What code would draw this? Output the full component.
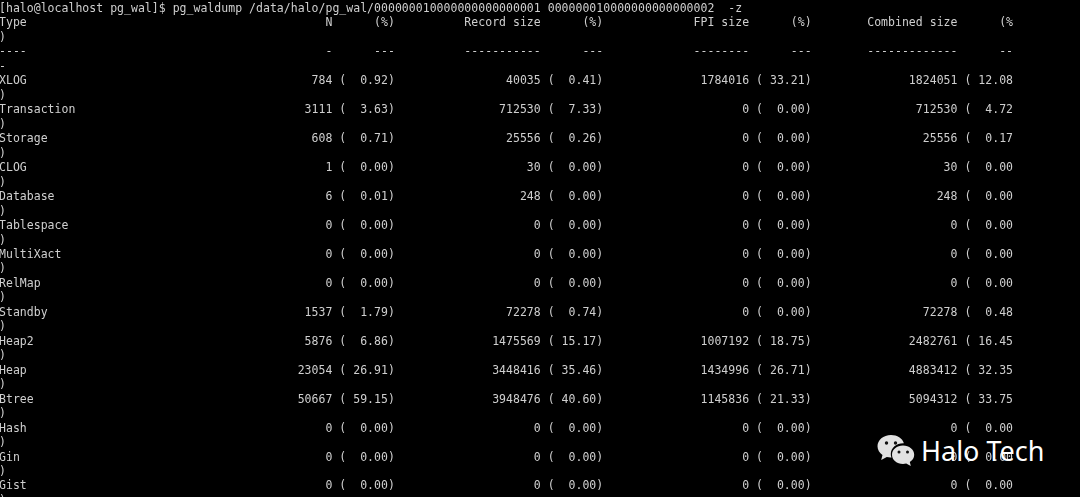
<script>
	const COLS = 146;

	// name, N, %, record size, %, fpi size, %, combined size, %
	const rows = [
		['XLOG', 784, '0.92', 40035, '0.41', 1784016, '33.21', 1824051, '12.08'],
		['Transaction', 3111, '3.63', 712530, '7.33', 0, '0.00', 712530, '4.72'],
		['Storage', 608, '0.71', 25556, '0.26', 0, '0.00', 25556, '0.17'],
		['CLOG', 1, '0.00', 30, '0.00', 0, '0.00', 30, '0.00'],
		['Database', 6, '0.01', 248, '0.00', 0, '0.00', 248, '0.00'],
		['Tablespace', 0, '0.00', 0, '0.00', 0, '0.00', 0, '0.00'],
		['MultiXact', 0, '0.00', 0, '0.00', 0, '0.00', 0, '0.00'],
		['RelMap', 0, '0.00', 0, '0.00', 0, '0.00', 0, '0.00'],
		['Standby', 1537, '1.79', 72278, '0.74', 0, '0.00', 72278, '0.48'],
		['Heap2', 5876, '6.86', 1475569, '15.17', 1007192, '18.75', 2482761, '16.45'],
		['Heap', 23054, '26.91', 3448416, '35.46', 1434996, '26.71', 4883412, '32.35'],
		['Btree', 50667, '59.15', 3948476, '40.60', 1145836, '21.33', 5094312, '33.75'],
		['Hash', 0, '0.00', 0, '0.00', 0, '0.00', 0, '0.00'],
		['Gin', 0, '0.00', 0, '0.00', 0, '0.00', 0, '0.00'],
		['Gist', 0, '0.00', 0, '0.00', 0, '0.00', 0, '0.00']
	];

	function header(c) {
		return (
			c[0].padEnd(27) +
			' ' + c[1].padStart(20) + ' ' + c[2].padStart(8) +
			' ' + c[3].padStart(20) + ' ' + c[4].padStart(8) +
			' ' + c[5].padStart(20) + ' ' + c[6].padStart(8) +
			' ' + c[7].padStart(20) + ' ' + c[8].padStart(8)
		);
	}

	function record(r) {
		let line = r[0].padEnd(27);
		for (let i = 1; i < r.length; i += 2) {
			line += ' ' + String(r[i]).padStart(20) + ' (' + r[i + 1].padStart(6) + ')';
		}
		return line;
	}

	// the terminal wraps at its column count
	function wrap(line) {
		return [line.slice(0, COLS), line.slice(COLS)];
	}

	const lines = [
		'[halo@localhost pg_wal]$ pg_waldump /data/halo/pg_wal/000000010000000000000001 000000010000000000000002  -z',
		...wrap(header(['Type', 'N', '(%)', 'Record size', '(%)', 'FPI size', '(%)', 'Combined size', '(%)'])),
		...wrap(header(['----', '-', '---', '-----------', '---', '--------', '---', '-------------', '---'])),
		...rows.flatMap((r) => wrap(record(r)))
	];
</script>

<main class="screen">
	<pre class="term">{lines.join('\n')}</pre>

	<div class="mark">
		<svg class="wechat" width="40" height="34" viewBox="0 0 40 34" aria-hidden="true">
			<path class="bubble" d="M15 1C7.3 1 1.5 6 1.5 12.3c0 3.6 2 6.7 5 8.8L5.2 26l5.6-2.9c1.2.3 2.5.5 3.8.5h.9c-.5-1.2-.7-2.4-.7-3.7 0-6 5.600-10.700 12.500-10.700h.6C26.400 4.300 21.200 1 15 1z" />
			<circle class="eye" cx="10.500" cy="9" r="1.700" />
			<circle class="eye" cx="19.500" cy="9" r="1.700" />
			<path class="bubble" d="M27 11.500c-6.100 0-11 4-11 9.200s4.900 9.200 11 9.200c1.100 0 2.200-.2 3.200-.4l4.600 2.500-1-4c2.700-1.700 4.400-4.300 4.400-7.300 0-5.200-5-9.200-11.200-9.200z" />
			<circle class="eye" cx="23" cy="18" r="1.500" />
			<circle class="eye" cx="31.500" cy="18" r="1.500" />
		</svg>
		<span class="brand">Halo Tech</span>
	</div>
</main>

<style>
	:global(body) {
		margin: 0;
		background: #000;
	}

	.screen {
		position: relative;
		height: 497px;
		overflow: hidden;
		background: #000;
	}

	.term {
		margin: 1px 0 0 -1px;
		font-family: 'DejaVu Sans Mono', monospace;
		font-size: 11.5px;
		letter-spacing: 0.022px;
		line-height: 14.47px;
		color: #cfcfcf;
		white-space: pre;
		filter: blur(0.3px);
	}

	.mark {
		position: absolute;
		left: 876px;
		top: 431px;
		display: flex;
		align-items: center;
		gap: 5px;
	}

	.bubble {
		fill: #e2e2e2;
	}

	.eye {
		fill: #111;
	}

	.brand {
		font-family: 'Noto Sans', sans-serif;
		font-size: 27px;
		line-height: 40px;
		color: #fff;
	}
</style>
